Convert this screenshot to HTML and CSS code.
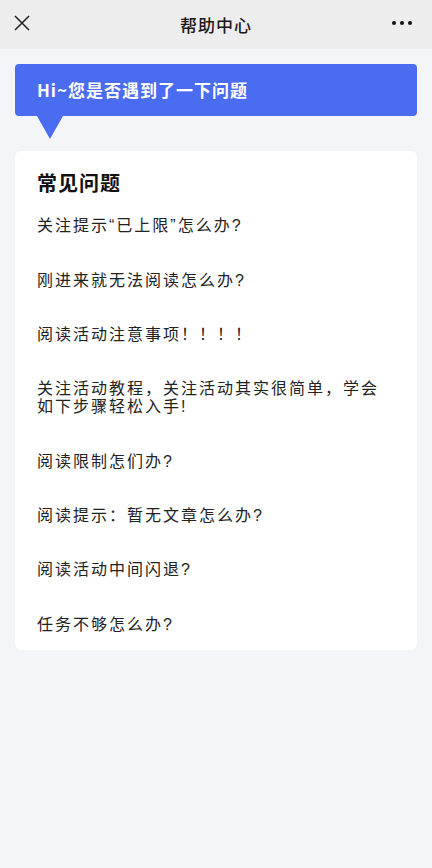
FILE: index.html
```html
<!DOCTYPE html>
<html lang="zh-CN">
<head>
  <meta charset="UTF-8">
  <meta name="viewport" content="width=device-width, initial-scale=1.0">
  <title>帮助中心</title>
  <link rel="stylesheet" href="styles.css">
</head>
<body>
  <div class="top-bar">
    <span class="bar-icon close-icon">
      <svg width="16" height="16" viewBox="0 0 16 16">
        <path d="M1 1 L15 15 M15 1 L1 15" stroke="#222" stroke-width="1.5" fill="none"/>
      </svg>
    </span>
    <span class="bar-title">帮助中心</span>
    <span class="bar-icon more-icon">
      <svg width="20" height="6" viewBox="0 0 20 6">
        <circle cx="2" cy="3" r="2" fill="#111"/>
        <circle cx="10" cy="3" r="2" fill="#111"/>
        <circle cx="18" cy="3" r="2" fill="#111"/>
      </svg>
    </span>
  </div>

  <div class="page">
    <div class="hello-bubble">Hi~您是否遇到了一下问题</div>

    <div class="faq-card">
      <h2 class="faq-title">常见问题</h2>
      <ul class="faq-list">
        <li>关注提示“已上限”怎么办?</li>
        <li>刚进来就无法阅读怎么办?</li>
        <li>阅读活动注意事项！！！！</li>
        <li>关注活动教程，关注活动其实很简单，学会如下步骤轻松入手!</li>
        <li>阅读限制怎们办?</li>
        <li>阅读提示：暂无文章怎么办?</li>
        <li>阅读活动中间闪退?</li>
        <li>任务不够怎么办?</li>
      </ul>
    </div>
  </div>
</body>
</html>
```

FILE: styles.css
```css
body {
  margin: 0;
  min-height: 100vh;
  background-color: #f3f5f9;
  font-family: "Noto Sans CJK SC", "Noto Sans", sans-serif;
}

.top-bar {
  display: grid;
  grid-template-columns: 1fr auto 1fr;
  align-items: center;
  height: 49px;
  background-color: #ededed;
}

.bar-icon {
  display: flex;
  align-items: center;
  margin-bottom: 4px;
}

.close-icon {
  padding-left: 14px;
}

.more-icon {
  justify-content: flex-end;
  padding-right: 20px;
}

.bar-title {
  font-size: 17px;
  font-weight: 500;
  letter-spacing: 1px;
  color: #191919;
}

.page {
  padding: 15px;
}

.hello-bubble {
  position: relative;
  height: 52px;
  line-height: 52px;
  padding-left: 22px;
  margin-bottom: 35px;
  background-color: #4a6cf1;
  border-radius: 4px;
  color: white;
  font-size: 17px;
  font-weight: bold;
  letter-spacing: 1px;
}

.hello-bubble::after {
  content: "";
  position: absolute;
  left: 22px;
  top: 52px;
  border-left: 13px solid transparent;
  border-right: 13px solid transparent;
  border-top: 23px solid #4a6cf1;
}

.faq-card {
  background-color: white;
  border-radius: 6px;
  padding: 18px 22px 0;
}

.faq-title {
  margin: 0;
  font-size: 20px;
  line-height: 28px;
  font-weight: bold;
  letter-spacing: 1px;
  color: #111;
}

.faq-list {
  list-style: none;
  margin: 0;
  padding: 2px 0 0;
}

.faq-list li {
  padding: 18.2px 0;
  font-family: "Liberation Sans", "Noto Sans CJK SC", sans-serif;
  font-size: 16px;
  line-height: 18px;
  letter-spacing: 2px;
  color: #222;
}

.faq-list li:last-child {
  padding-bottom: 16px;
}
```
